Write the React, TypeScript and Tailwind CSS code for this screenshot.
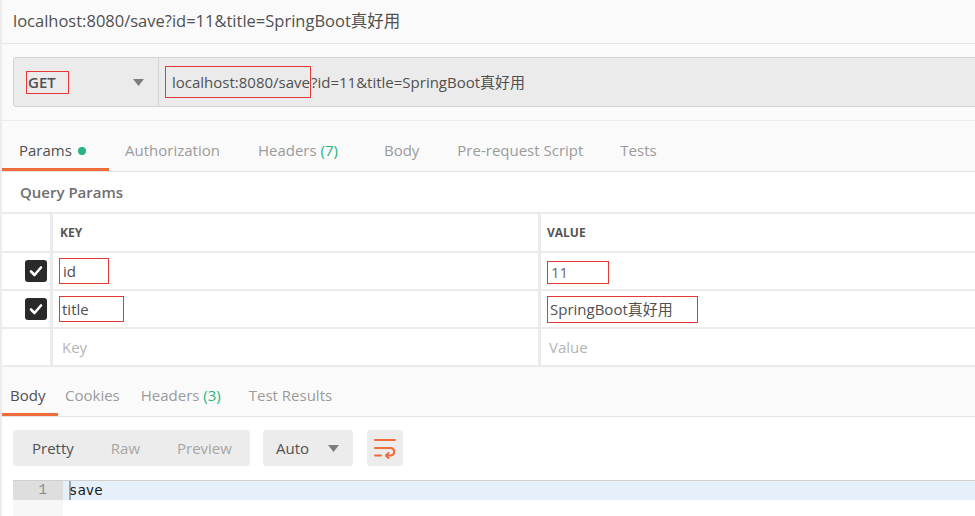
import React from "react";

const F = { fontFamily: '"Open Sans", "Noto Sans CJK SC", sans-serif' };

function Caret() {
  return (
    <svg width="11" height="7" viewBox="0 0 11 7">
      <path d="M0 0 H11 L5.5 7 Z" fill="#7d7d7d" />
    </svg>
  );
}

function Check() {
  return (
    <div className="w-[22px] h-[22px] rounded-[3px] bg-[#2a2a2a] flex items-center justify-center">
      <svg width="14" height="12" viewBox="0 0 14 12">
        <path d="M2 6.5 L5.5 10 L12 2.5" stroke="#fff" strokeWidth="2.6" fill="none" strokeLinecap="round" strokeLinejoin="round" />
      </svg>
    </div>
  );
}

function WrapIcon() {
  return (
    <svg width="24" height="22" viewBox="0 0 24 22">
      <g stroke="#f26b3a" strokeWidth="2" fill="none" strokeLinecap="round" strokeLinejoin="round">
        <path d="M2 3 H22" />
        <path d="M2 11 H18 A3.8 3.8 0 0 1 18 18.5 H13" />
        <path d="M15.5 16 L13 18.5 L15.5 21" />
        <path d="M2 18.5 H8" />
      </g>
    </svg>
  );
}

export default function App() {
  return (
    <div style={F} className="w-[975px] h-[516px] overflow-hidden bg-[#fafafa] border-l-2 border-[#ececec] text-[#505050]">
      {/* Title */}
      <div className="h-[44px] border-b border-[#e6e6e6] flex items-center pl-[11px] text-[16.5px] text-[#505050] whitespace-nowrap">
        localhost:8080/save?id=11&amp;title=SpringBoot真好用
      </div>
      {/* URL bar */}
      <div className="pt-[13px] pl-[11px] h-[77px] border-b border-[#ececec]">
        <div className="h-[50px] w-[990px] flex bg-[#ebebeb] border border-[#d3d3d3] rounded-l-[3px]">
          <div className="w-[145px] border-r border-[#d3d3d3] flex items-center pl-[12px] pr-[14px] justify-between">
            <div className="border border-[#e53935] w-[43px] h-[23px] flex items-center pl-[1px]">
              <span className="text-[15px] font-semibold text-[#505050]">GET</span>
            </div>
            <Caret />
          </div>
          <div className="flex items-center pl-[6px] text-[15px] text-[#505050] whitespace-nowrap">
            <span className="border border-[#e53935] h-[32px] flex items-center pl-[6px]">localhost:8080/save</span>
            <span>?id=11&amp;title=SpringBoot真好用</span>
          </div>
        </div>
      </div>
      {/* Request tabs */}
      <div className="h-[51px] border-b border-[#e4e4e4] flex items-start text-[15px] text-[#9b9b9b]">
        <div className="flex flex-col w-[107px]">
          <div className="h-[47px] flex items-center pt-[12px] pl-[17px] text-[#505050]">
            Params
            <span className="ml-[6px] w-[8px] h-[8px] rounded-full bg-[#26b47f] inline-block" />
          </div>
          <div className="h-[3px] bg-[#f26b3a]" />
        </div>
        <div className="flex h-[47px] items-center pt-[12px] pl-[16px]">
          <span>Authorization</span>
          <span className="ml-[38px]">Headers <span className="text-[#26b47f]">(7)</span></span>
          <span className="ml-[46px]">Body</span>
          <span className="ml-[38px]">Pre-request Script</span>
          <span className="ml-[37px]">Tests</span>
        </div>
      </div>
      {/* Query params */}
      <div className="bg-white">
        <div className="h-[40px] flex items-center pl-[18px] text-[15px] font-semibold text-[#6e6e6e]">Query Params</div>
        <div className="border-t-2 border-[#ebebeb]">
          {/* Header row */}
          <div className="flex h-[39px] border-b-2 border-[#ebebeb]">
            <div className="w-[48px]" />
            <div className="w-[488px] border-l-[3px] border-[#ebebeb] flex items-center pl-[7px] text-[12px] font-bold text-[#555]">KEY</div>
            <div className="flex-1 border-l-[3px] border-[#ebebeb] flex items-center pl-[6px] text-[12px] font-bold text-[#555]">VALUE</div>
          </div>
          {/* Row 1 */}
          <div className="flex h-[38px] border-b-2 border-[#ebebeb] text-[15px] text-[#505050]">
            <div className="w-[48px] flex items-center justify-end pr-[3px]"><Check /></div>
            <div className="w-[488px] border-l-[3px] border-[#ebebeb] flex items-center pl-[6px]">
              <span className="border border-[#e53935] w-[50px] h-[26px] flex items-center pl-[3px]">id</span>
            </div>
            <div className="flex-1 border-l-[3px] border-[#ebebeb] flex items-center pl-[6px] pt-[2px]">
              <span className="border border-[#e53935] w-[62px] h-[23px] flex items-center pl-[3px] text-[#6a6a6a]">11</span>
            </div>
          </div>
          {/* Row 2 */}
          <div className="flex h-[38px] border-b-2 border-[#ebebeb] text-[15px] text-[#505050]">
            <div className="w-[48px] flex items-center justify-end pr-[3px]"><Check /></div>
            <div className="w-[488px] border-l-[3px] border-[#ebebeb] flex items-center pl-[6px]">
              <span className="border border-[#e53935] w-[65px] h-[26px] flex items-center pl-[2px]">title</span>
            </div>
            <div className="flex-1 border-l-[3px] border-[#ebebeb] flex items-center pl-[6px]">
              <span className="border border-[#e53935] w-[151px] h-[27px] flex items-center pl-[2px] whitespace-nowrap">SpringBoot真好用</span>
            </div>
          </div>
          {/* Row 3 */}
          <div className="flex h-[38px] border-b-2 border-[#ebebeb] text-[15px] text-[#b4b4b4]">
            <div className="w-[48px]" />
            <div className="w-[488px] border-l-[3px] border-[#ebebeb] flex items-center pl-[9px]">Key</div>
            <div className="flex-1 border-l-[3px] border-[#ebebeb] flex items-center pl-[8px]">Value</div>
          </div>
        </div>
      </div>
      {/* Response tabs */}
      <div className="h-[50px] border-b border-[#e4e4e4] flex items-start text-[15px] text-[#9b9b9b]">
        <div className="flex flex-col w-[56px]">
          <div className="h-[46px] flex items-center pt-[11px] pl-[8px] text-[#505050]">Body</div>
          <div className="h-[3px] bg-[#f26b3a]" />
        </div>
        <div className="flex h-[46px] items-center pt-[11px] pl-[7px]">
          <span>Cookies</span>
          <span className="ml-[21px]">Headers <span className="text-[#26b47f]">(3)</span></span>
          <span className="ml-[28px]">Test Results</span>
        </div>
      </div>
      {/* Response body */}
      <div className="bg-white h-[100px] pl-[11px] pt-[13px]">
        <div className="flex items-center gap-[13px] h-[36px]">
          <div className="w-[237px] h-[36px] rounded-[4px] bg-[#ececec] flex items-center text-[15px] text-[#a6a6a6]">
            <span className="ml-[19px] text-[#505050]">Pretty</span>
            <span className="ml-[37px]">Raw</span>
            <span className="ml-[37px]">Preview</span>
          </div>
          <div className="w-[90px] h-[36px] rounded-[4px] bg-[#ececec] flex items-center justify-between pl-[13px] pr-[14px] text-[15px] text-[#505050]">
            <span>Auto</span>
            <Caret />
          </div>
          <div className="ml-[1px] w-[36px] h-[36px] rounded-[4px] bg-[#ececec] flex items-center justify-center">
            <WrapIcon />
          </div>
        </div>
        <div className="mt-[14px] border-t border-[#d0d0d0] w-[1000px]">
          <div className="flex h-[19px]">
            <div className="w-[50px] bg-[#dedede] text-right pr-[16px] text-[14px] leading-[19px] text-[#8a8a8a]" style={{ fontFamily: '"Liberation Mono", monospace' }}>1</div>
            <div className="flex-1 bg-[#e6f0fb] pl-[6px] flex items-center">
              <span className="w-[2px] h-[19px] bg-[#9aa6b2] -mr-[2px]" />
              <span className="text-[14px] leading-[19px] text-[#1a1a1a]" style={{ fontFamily: '"DejaVu Sans Mono", monospace' }}>save</span>
            </div>
          </div>
          <div className="flex h-[20px]">
            <div className="w-[50px] bg-[#f7f7f7]" />
            <div className="flex-1" />
          </div>
        </div>
      </div>
    </div>
  );
}
